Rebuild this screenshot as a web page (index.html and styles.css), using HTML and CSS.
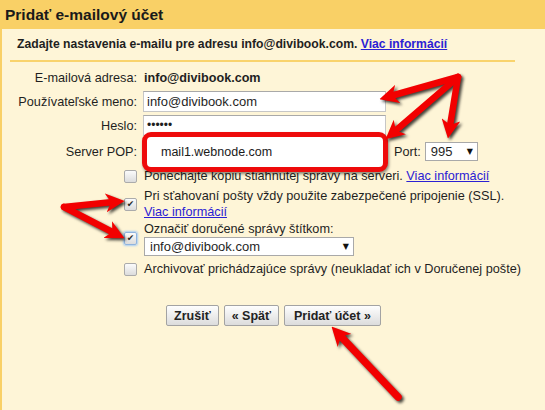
FILE: index.html
```html
<!DOCTYPE html>
<html lang="sk">
<head>
<meta charset="utf-8">
<title>Pridať e-mailový účet</title>
<link rel="stylesheet" href="styles.css">
</head>
<body>
<div class="page">
  <div class="header"><h1>Pridať e-mailový účet</h1></div>
  <div class="content">
    <p class="intro">Zadajte nastavenia e-mailu pre adresu info@divibook.com. <a href="#">Viac informácií</a></p>
    <div class="form">
      <div class="row mt0">
        <span class="label">E-mailová adresa:</span>
        <b class="value">info@divibook.com</b>
      </div>
      <div class="row mt5">
        <span class="label">Používateľské meno:</span>
        <span class="input">info@divibook.com</span>
      </div>
      <div class="row mt3">
        <span class="label">Heslo:</span>
        <span class="input pw">••••••</span>
      </div>
      <div class="row mt5">
        <span class="label">Server POP:</span>
        <div class="server">
          <span class="input"></span>
          <span class="highlight">mail1.webnode.com</span>
          <span class="port-label">Port:</span>
          <span class="select port">995<i class="caret">▼</i></span>
        </div>
      </div>
      <div class="row check mt6">
        <span class="cb"></span>
        <span class="text">Ponechajte kópiu stiahnutej správy na serveri. <a href="#">Viac informácií</a></span>
      </div>
      <div class="row check mt4">
        <span class="cb checked">✔</span>
        <span class="text">Pri sťahovaní pošty vždy použite zabezpečené pripojenie (SSL).<br><a href="#">Viac informácií</a></span>
      </div>
      <div class="row check mt1">
        <span class="cb checked focus">✔</span>
        <div class="text">Označiť doručené správy štítkom:
          <span class="select label-select">info@divibook.com<i class="caret">▼</i></span>
        </div>
      </div>
      <div class="row check mt5">
        <span class="cb"></span>
        <span class="text">Archivovať prichádzajúce správy (neukladať ich v Doručenej pošte)</span>
      </div>
    </div>
    <div class="buttons">
      <button type="button">Zrušiť</button>
      <button type="button">« Späť</button>
      <button type="button" class="primary">Pridať účet »</button>
    </div>
  </div>

  <svg class="annotations" width="545" height="410" viewBox="0 0 545 410">
    <defs>
      <marker id="head" markerUnits="userSpaceOnUse" markerWidth="19" markerHeight="19" viewBox="0 0 18 18" refX="7" refY="9" orient="auto">
        <path d="M0,0 L18,9 L0,18 L5,9 Z" fill="#f20000"/>
      </marker>
    </defs>
    <g class="arrows" stroke="#f20000" stroke-width="6.5" stroke-linecap="round" fill="none">
      <line x1="458" y1="77" x2="390.6" y2="96" marker-end="url(#head)"/>
      <line x1="458" y1="77" x2="394.3" y2="131.8" marker-end="url(#head)"/>
      <line x1="458" y1="77" x2="449.8" y2="127.1" marker-end="url(#head)"/>
      <line x1="64" y1="207" x2="113.1" y2="202.1" marker-end="url(#head)"/>
      <line x1="64" y1="207" x2="114.2" y2="233" marker-end="url(#head)"/>
      <line x1="398" y1="397" x2="339.5" y2="335" stroke-width="7.5" marker-end="url(#head)"/>
    </g>
  </svg>
</div>
</body>
</html>
```
FILE: styles.css
```css
* { box-sizing: border-box; }

body {
  margin: 0;
  width: 545px;
  height: 410px;
  overflow: hidden;
  font-family: "Liberation Sans", Arial, sans-serif;
  color: #1f1f1f;
  background: #fef5d7;
}

.page {
  position: relative;
  width: 545px;
  height: 410px;
}

.header {
  height: 29px;
  background: #f9d066;
  padding: 4px 0 0 5px;
}

.header h1 {
  margin: 0;
  font-size: 15.5px;
  line-height: 22px;
  font-weight: bold;
  color: #1a1a1a;
}

.content {
  border-left: 2px solid #f9d066;
  height: 381px;
}

.intro {
  margin: 0 30px 0 8px;
  padding: 7px 0 8px 7px;
  font-size: 12.2px;
  font-weight: bold;
  line-height: 16px;
  border-bottom: 2px solid #f9d36c;
}

a { color: #2b21d4; text-decoration: underline; }

.form {
  margin-top: 8px;
  font-size: 12.7px;
  line-height: 16px;
}

.row {
  display: grid;
  grid-template-columns: 135px 1fr;
  column-gap: 6px;
  align-items: center;
}

.mt0 { margin-top: 0; }
.mt1 { margin-top: 1px; }
.mt3 { margin-top: 3px; }
.mt4 { margin-top: 4px; }
.mt5 { margin-top: 5px; }
.mt6 { margin-top: 6px; }

.label { text-align: right; white-space: nowrap; }

.value { padding-left: 1px; font-size: 12.6px; }

.input {
  display: block;
  width: 243px;
  height: 21px;
  background: #fff;
  border: 1px solid #c6c6c6;
  border-top-color: #a9a9a9;
  padding: 0 3px;
  font-size: 13px;
  line-height: 19px;
  color: #1f1f1f;
}

.pw { letter-spacing: 0; font-size: 12px; }

.server {
  position: relative;
  display: flex;
  align-items: center;
}

.highlight {
  position: absolute;
  left: -1px;
  top: -9px;
  width: 246px;
  height: 40px;
  border: 5px solid #ee0b0b;
  border-radius: 9px;
  background: #fff;
  box-shadow: 1px 2px 3px rgba(0, 0, 0, 0.45);
  padding-left: 14px;
  font-size: 12.5px;
  line-height: 30px;
  color: #1a1a1a;
}

.port-label { margin-left: 8px; }

.select {
  display: flex;
  align-items: center;
  justify-content: space-between;
  height: 19px;
  background: #fff;
  border: 1px solid #a9a9a9;
  padding: 0 4px 0 5px;
  font-size: 13px;
  line-height: 17px;
}

.port { width: 53px; margin-left: 4px; }

.label-select { width: 210px; margin-top: 0; }

.caret {
  font-style: normal;
  font-family: "DejaVu Sans", sans-serif;
  font-size: 8px;
  color: #111;
}

.check .cb { justify-self: end; }

.cb {
  display: flex;
  align-items: center;
  justify-content: center;
  width: 13px;
  height: 13px;
  border: 1px solid #ababab;
  border-radius: 2px;
  background: linear-gradient(#fbfbfb, #dcdcdc);
  font-family: "DejaVu Sans", sans-serif;
  font-size: 9px;
  line-height: 1;
  color: #2a2a2a;
}

.cb.focus {
  border-color: #8fb4df;
  box-shadow: 0 0 2px 1px #a9cdf3;
}

.check .text { padding-left: 1px; }

.buttons {
  display: flex;
  justify-content: center;
  gap: 5px;
  margin-top: 28px;
}

.buttons button {
  height: 21px;
  padding: 0 7px;
  font-family: "Liberation Sans", Arial, sans-serif;
  font-size: 12.5px;
  font-weight: bold;
  color: #222;
  border: 1px solid #a3a3a3;
  border-radius: 2px;
  background: linear-gradient(#fefefe, #dcdcdc);
}

.buttons .primary { padding: 0 9px; }

.annotations {
  position: absolute;
  left: 0;
  top: 0;
  pointer-events: none;
}

.arrows {
  filter: drop-shadow(2px 2px 1.5px rgba(0, 0, 0, 0.75));
}
```
